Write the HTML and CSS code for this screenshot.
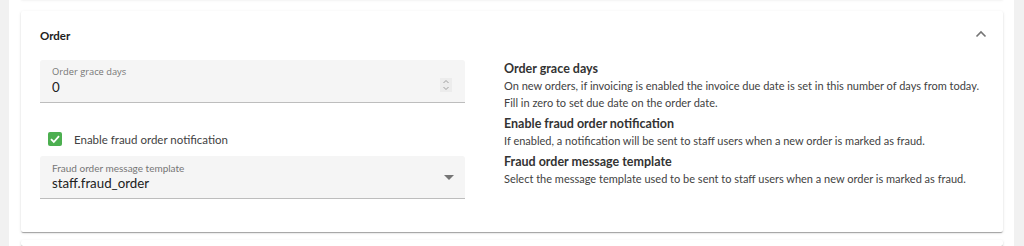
FILE: index.html
```html
<!DOCTYPE html>
<html>
<head>
<meta charset="utf-8">
<link rel="stylesheet" href="styles.css">
</head>
<body>
<div class="page">
  <div class="panel prev"></div>
  <div class="panel">
    <div class="panel-header">
      <span class="panel-title">Order</span>
      <svg class="chevron" width="12" height="8" viewBox="0 0 12 8"><path d="M1.5 6.5 L6 2 L10.5 6.5" fill="none" stroke="#757575" stroke-width="1.6"/></svg>
    </div>
    <div class="panel-body">
      <div class="fields">
        <div class="field">
          <div class="field-label">Order grace days</div>
          <div class="field-value">0</div>
          <div class="spinner">
            <svg width="10" height="14" viewBox="0 0 10 14"><path d="M2.5 5 L5 2.5 L7.5 5 M2.5 9 L5 11.5 L7.5 9" fill="none" stroke="#9e9e9e" stroke-width="1"/></svg>
          </div>
        </div>
        <label class="check-row">
          <span class="checkbox">
            <svg width="14" height="14" viewBox="0 0 14 14"><path d="M3 7.2 L5.8 10 L11 4.2" fill="none" stroke="#fff" stroke-width="1.8"/></svg>
          </span>
          <span class="check-label">Enable fraud order notification</span>
        </label>
        <div class="field select">
          <div class="field-label">Fraud order message template</div>
          <div class="field-value">staff.fraud_order</div>
          <svg class="arrow" width="10" height="5" viewBox="0 0 10 5"><path d="M0 0 L10 0 L5 5 Z" fill="#757575"/></svg>
        </div>
      </div>
      <div class="help">
        <div class="help-title">Order grace days</div>
        <div class="help-text">On new orders, if invoicing is enabled the invoice due date is set in this number of days from today.</div>
        <div class="help-text">Fill in zero to set due date on the order date.</div>
        <div class="help-title">Enable fraud order notification</div>
        <div class="help-text">If enabled, a notification will be sent to staff users when a new order is marked as fraud.</div>
        <div class="help-title">Fraud order message template</div>
        <div class="help-text">Select the message template used to be sent to staff users when a new order is marked as fraud.</div>
      </div>
    </div>
  </div>
  <div class="panel next"></div>
</div>
</body>
</html>
```
FILE: styles.css
```css
html, body {
  margin: 0;
  padding: 0;
  background: #f1f1f1;
  height: 246px;
  overflow: hidden;
  font-family: "Lato", "Open Sans", sans-serif;
  color: #212121;
}
.page {
  margin-left: 9px;
  width: 1005px;
  height: 246px;
  overflow: hidden;
  background: #fff;
  padding-left: 12px;
  padding-right: 11px;
  box-sizing: border-box;
}
.panel {
  background: #fff;
  border-radius: 2px;
  box-shadow: 0 2px 1px -1px rgba(0,0,0,.2), 0 1px 1px 0 rgba(0,0,0,.14), 0 1px 3px 0 rgba(0,0,0,.12);
}
.panel.prev {
  height: 1px;
  margin-top: -2px;
  margin-bottom: 12px;
}
.panel.next {
  margin-top: 8px;
  height: 6px;
}
.panel-header {
  height: 48px;
  display: flex;
  align-items: center;
  justify-content: space-between;
  padding: 0 16px 0 19px;
}
.panel-title {
  font-size: 11.5px;
  font-weight: 700;
  color: #212121;
}
.chevron {
  margin-top: -2px;
}
.panel-body {
  display: grid;
  grid-template-columns: 425px 1fr;
  column-gap: 39px;
  padding: 1px 19px 33px 19px;
}
.fields {
  display: flex;
  flex-direction: column;
}
.field {
  position: relative;
  background: #f5f5f5;
  border-bottom: 1px solid #bdbdbd;
  border-radius: 3px 3px 0 0;
  height: 43px;
  box-sizing: border-box;
  padding: 6px 12px 0 12px;
}
.field-label {
  font-family: "Open Sans", sans-serif;
  font-size: 9.3px;
  color: #757575;
  line-height: 12px;
}
.field-value {
  font-size: 13.3px;
  line-height: 19px;
  color: #212121;
}
.spinner {
  position: absolute;
  right: 13px;
  top: 18px;
  width: 12px;
  height: 14px;
  background: #ececec;
  display: flex;
  align-items: center;
  justify-content: center;
}
.check-row {
  display: flex;
  align-items: center;
  height: 30px;
  margin-top: 21px;
  margin-bottom: 2px;
  padding-left: 8px;
}
.checkbox {
  width: 14px;
  height: 14px;
  background: #4caf50;
  border-radius: 2px;
  display: flex;
}
.check-label {
  margin-left: 12px;
  font-size: 11.5px;
  color: #424242;
}
.field.select .field-label {
  font-family: "Lato", sans-serif;
  font-size: 10px;
}
.arrow {
  position: absolute;
  right: 11px;
  top: 19px;
}
.help-title {
  font-size: 12.5px;
  font-weight: 700;
  color: #333;
  line-height: 17px;
  margin-top: 4px;
}
.help-title:first-child {
  margin-top: 0;
}
.help-text {
  font-size: 11px;
  color: #424242;
  line-height: 17px;
}
```
